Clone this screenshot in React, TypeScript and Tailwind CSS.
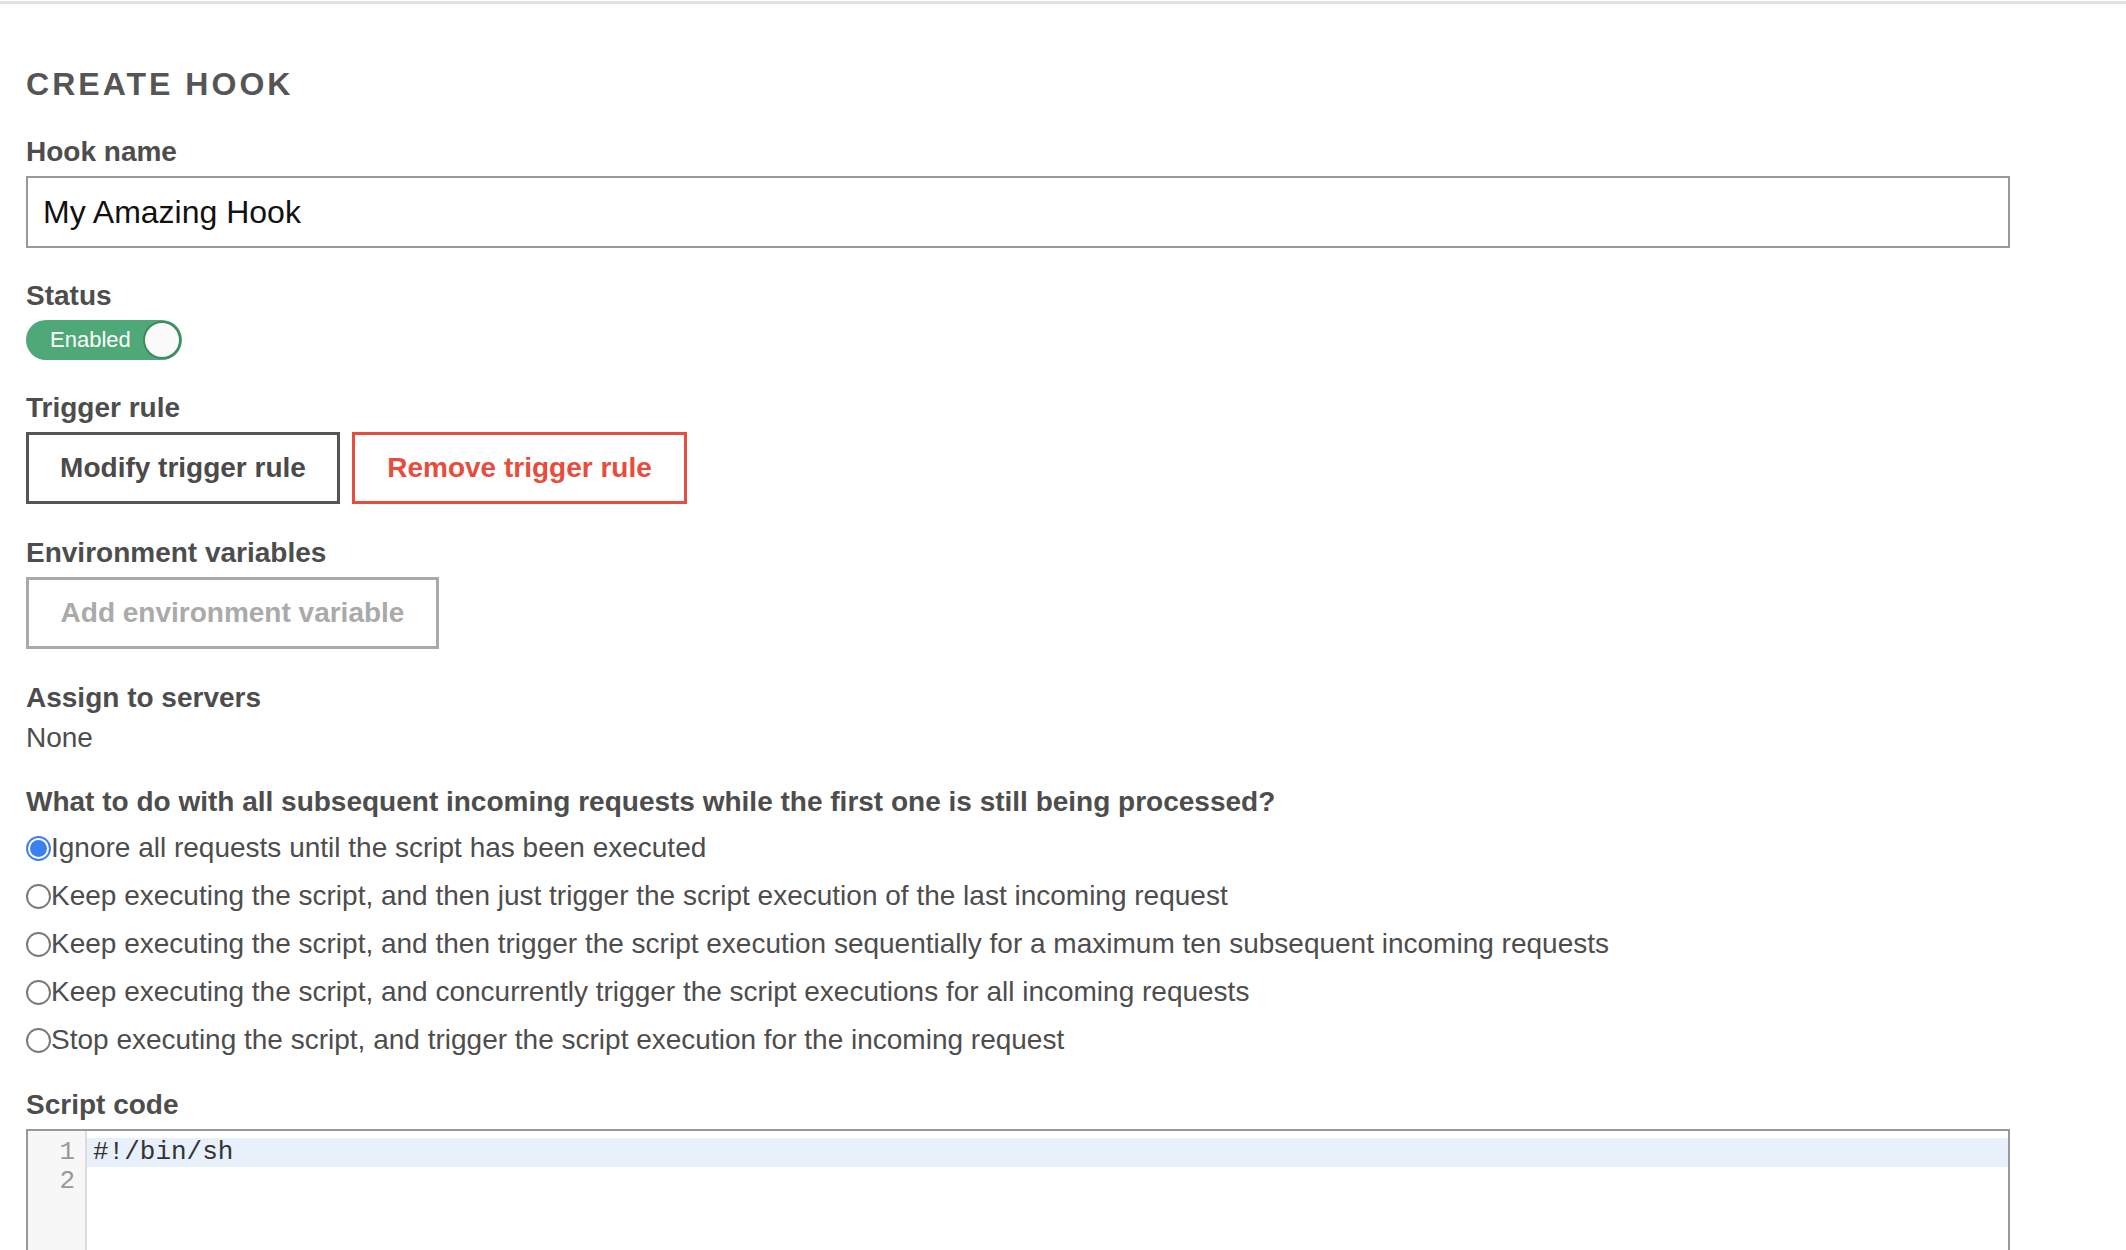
import { useState } from "react";

const FONT = { fontFamily: '"Liberation Sans", Arial, Helvetica, sans-serif' };

const options = [
  "Ignore all requests until the script has been executed",
  "Keep executing the script, and then just trigger the script execution of the last incoming request",
  "Keep executing the script, and then trigger the script execution sequentially for a maximum ten subsequent incoming requests",
  "Keep executing the script, and concurrently trigger the script executions for all incoming requests",
  "Stop executing the script, and trigger the script execution for the incoming request",
];

function Label({ children, className = "mb-2" }: { children: React.ReactNode; className?: string }) {
  return <p className={`${className} h-8 text-[28px] font-bold leading-8 text-[#4d4d4d]`}>{children}</p>;
}

function Radio({ checked }: { checked: boolean }) {
  if (checked) {
    return (
      <span className="flex size-[25px] shrink-0 items-center justify-center rounded-full border-[2px] border-[#3b7ff0] bg-white">
        <span className="size-[17px] rounded-full bg-[#3b7ff0]" />
      </span>
    );
  }
  return <span className="size-[25px] shrink-0 rounded-full border-[2px] border-[#7a7a7a] bg-white" />;
}

export default function App() {
  const [choice, setChoice] = useState(0);
  const [enabled, setEnabled] = useState(true);

  return (
    <div className="min-h-[1250px] bg-white" style={FONT}>
      <div className="mt-[1px] h-[3px] bg-[#e2e2e2]" />
      <div className="w-[2010px] pl-[26px] pt-[60px]">
        <h1 className="mb-8 h-10 text-[32px] font-bold uppercase leading-10 tracking-[0.095em] text-[#555]">
          Create hook
        </h1>

        <div className="mb-8">
          <Label>Hook name</Label>
          <input
            defaultValue="My Amazing Hook"
            className="h-[72px] w-full border-2 border-[#999] px-[15px] text-[32px] text-[#111] outline-none"
          />
        </div>

        <div className="mb-8">
          <Label>Status</Label>
          <button
            type="button"
            onClick={() => setEnabled(!enabled)}
            className="flex h-[40px] w-[156px] items-center justify-between rounded-full bg-[#4fa877] pl-[24px] pr-[1px]"
          >
            <span className="text-[22px] leading-none text-white">Enabled</span>
            <span className="size-[38px] rounded-full border-[2px] border-[#3c8a5e] bg-[#fafafa]" />
          </button>
        </div>

        <div className="mb-[33px]">
          <Label>Trigger rule</Label>
          <div className="flex gap-3">
            <button
              type="button"
              className="flex h-[72px] w-[314px] items-center justify-center border-[3px] border-[#555] text-[28px] font-bold text-[#4a4a4a]"
            >
              Modify trigger rule
            </button>
            <button
              type="button"
              className="flex h-[72px] w-[335px] items-center justify-center border-[3px] border-[#e74c3c] text-[28px] font-bold text-[#e74c3c]"
            >
              Remove trigger rule
            </button>
          </div>
        </div>

        <div className="mb-[33px]">
          <Label>Environment variables</Label>
          <button
            type="button"
            className="flex h-[72px] w-[413px] items-center justify-center border-[3px] border-[#aaa] text-[28px] font-bold text-[#aaa]"
          >
            Add environment variable
          </button>
        </div>

        <div className="mb-8">
          <Label>Assign to servers</Label>
          <p className="h-8 text-[28px] leading-8 text-[#4d4d4d]">None</p>
        </div>

        <div className="mb-[25px]">
          <Label className="mb-[6px]">
            What to do with all subsequent incoming requests while the first one is still being processed?
          </Label>
          <div className="flex flex-col">
            {options.map((o, i) => (
              <label key={o} onClick={() => setChoice(i)} className="flex h-[48px] cursor-pointer items-center">
                <Radio checked={choice === i} />
                <span className="text-[28px] leading-8 text-[#4d4d4d]">{o}</span>
              </label>
            ))}
          </div>
        </div>

        <div>
          <Label>Script code</Label>
          <div
            className="flex h-[200px] w-full border-2 border-[#999] pt-[7px]"
            style={{ fontFamily: '"Liberation Mono", "Courier New", monospace' }}
          >
            <div className="-mt-[7px] w-[59px] shrink-0 border-r-2 border-[#ddd] bg-[#f7f7f7] pr-[10px] pt-[7px] text-right text-[26px] leading-[29px] text-[#999]">
              <div>1</div>
              <div>2</div>
            </div>
            <div className="flex-1 text-[26px] leading-[29px] text-[#333]">
              <div className="bg-[#e8f0fc] pl-[6px]">#!/bin/sh</div>
              <div className="pl-[6px]">&nbsp;</div>
            </div>
          </div>
        </div>
      </div>
    </div>
  );
}
